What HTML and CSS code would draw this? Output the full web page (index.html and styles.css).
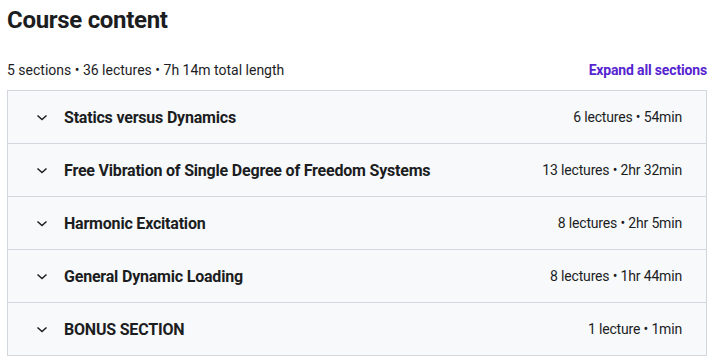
FILE: index.html
```html
<!DOCTYPE html>
<html lang="en">
<head>
    <meta charset="UTF-8">
    <meta name="viewport" content="width=device-width, initial-scale=1.0">
    <title>Course content</title>
    <link rel="stylesheet" href="styles.css">
</head>
<body>
    <div class="course-content">
        <h2>Course content</h2>
        <div class="summary">
            <span>5 sections • 36 lectures • 7h 14m total length</span>
            <a href="#" class="expand-all">Expand all sections</a>
        </div>

        <!-- Lista de secciones -->
        <div class="sections">
            <div class="section">
                <svg class="chevron" viewBox="0 0 12 12"><path d="M1.5 4.5L6 8.5l4.5-4"/></svg>
                <span class="section-title">Statics versus Dynamics</span>
                <span class="section-meta">6 lectures • 54min</span>
            </div>
            <div class="section">
                <svg class="chevron" viewBox="0 0 12 12"><path d="M1.5 4.5L6 8.5l4.5-4"/></svg>
                <span class="section-title">Free Vibration of Single Degree of Freedom Systems</span>
                <span class="section-meta">13 lectures • 2hr 32min</span>
            </div>
            <div class="section">
                <svg class="chevron" viewBox="0 0 12 12"><path d="M1.5 4.5L6 8.5l4.5-4"/></svg>
                <span class="section-title">Harmonic Excitation</span>
                <span class="section-meta">8 lectures • 2hr 5min</span>
            </div>
            <div class="section">
                <svg class="chevron" viewBox="0 0 12 12"><path d="M1.5 4.5L6 8.5l4.5-4"/></svg>
                <span class="section-title">General Dynamic Loading</span>
                <span class="section-meta">8 lectures • 1hr 44min</span>
            </div>
            <div class="section">
                <svg class="chevron" viewBox="0 0 12 12"><path d="M1.5 4.5L6 8.5l4.5-4"/></svg>
                <span class="section-title">BONUS SECTION</span>
                <span class="section-meta">1 lecture • 1min</span>
            </div>
        </div>
    </div>
</body>
</html>
```

FILE: styles.css
```css
body {
    font-family: Roboto, "Liberation Sans", sans-serif;
    background-color: #ffffff;
    color: #2d2f31;
    margin: 0;
    padding: 0;
}
.course-content {
    width: 700px;
    padding: 5px 8px 0 7px;
}
h2 {
    font-size: 24px;
    font-weight: 700;
    color: #1c1d1f;
    margin: 0;
    line-height: 30px;
    letter-spacing: -0.3px;
}
.summary {
    display: flex;
    justify-content: space-between;
    align-items: center;
    font-size: 14px;
    color: #1c1d1f;
    margin-top: 25px;
    height: 20px;
    margin-bottom: 10px;
}
.expand-all {
    color: #5624d0;
    font-weight: 700;
    text-decoration: none;
    letter-spacing: -0.16px;
}
.sections {
    border: 1px solid #d1d7dc;
    border-bottom: none;
}
.section {
    display: flex;
    align-items: center;
    height: 52px;
    padding: 0 24px 0 28px;
    background-color: #f7f9fa;
    border-bottom: 1px solid #d1d7dc;
}
.chevron {
    width: 12px;
    height: 12px;
    fill: none;
    stroke: #1c1d1f;
    stroke-width: 1.5;
    margin-right: 16px;
}
.section-title {
    flex: 1;
    font-size: 16px;
    font-weight: 700;
    color: #1c1d1f;
    letter-spacing: -0.2px;
}
.section-meta {
    font-size: 14px;
    color: #1c1d1f;
    letter-spacing: -0.17px;
}
```
